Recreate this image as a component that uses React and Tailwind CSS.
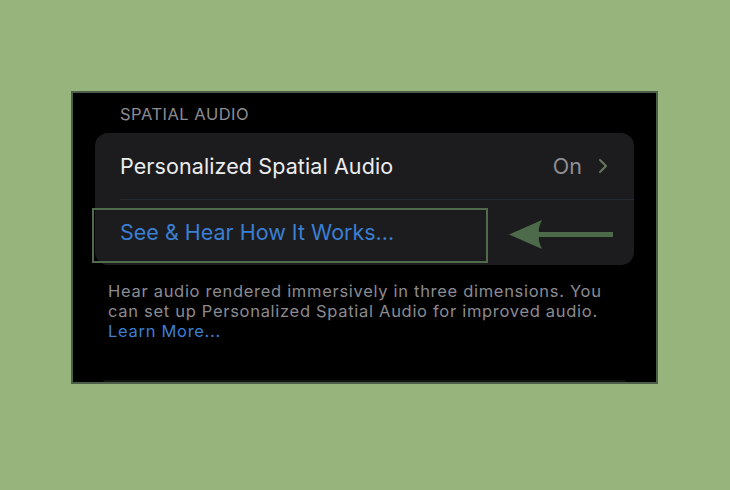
import React from "react";

const font = { fontFamily: "Inter, 'Noto Sans', 'Liberation Sans', sans-serif" };

function Chevron() {
  return (
    <svg width="10" height="16" viewBox="0 0 10 16" fill="none">
      <path d="M2 2l6 6-6 6" stroke="#66785f" strokeWidth="2" strokeLinecap="round" strokeLinejoin="round" />
    </svg>
  );
}

function Arrow() {
  return (
    <svg width="104" height="31" viewBox="0 0 104 31" className="absolute left-[414px] top-[86px]">
      <path
        d="M0 15.5 L33 1 Q29 9 30 13 L104 13 L104 18 L30 18 Q29 22 33 30 Z"
        fill="#4d6a4b"
      />
    </svg>
  );
}

export default function App() {
  return (
    <div className="w-[730px] h-[490px] bg-[#97b47c] pt-[91px] pl-[71px]" style={font}>
      <div className="w-[587px] h-[293px] border-2 border-[#4b5e47] bg-black flex flex-col overflow-hidden">
        <div className="pt-[11px] pl-[47px] text-[16.5px] leading-[20px] tracking-[0.5px] text-[#8d8d92]">
          SPATIAL AUDIO
        </div>
        <div className="relative mt-[9px] ml-[22px] w-[539px] h-[132px] rounded-[13px] bg-[#1c1c1e] flex flex-col">
          <div className="h-[66px] flex items-center pl-[25px] pr-[26px]">
            <span className="text-[21.5px] tracking-[0.1px] text-[#ececee] flex-1">Personalized Spatial Audio</span>
            <span className="text-[21.5px] text-[#8e8e93] mr-[16px]">On</span>
            <Chevron />
          </div>
          <div className="ml-[25px] h-px bg-[#262b31]" />
          <div className="h-[65px] flex items-center pl-[25px]">
            <span className="text-[21.5px] text-[#3a7fd3]">See &amp; Hear How It Works...</span>
          </div>
          <div className="absolute left-[-3px] top-[75px] w-[396px] h-[55px] border-2 border-[#4f6b4c]" />
          <Arrow />
        </div>
        <div className="mt-[16px] pl-[35px] pr-[10px] text-[16.5px] leading-[20px] tracking-[0.7px] text-[#8b8b90] whitespace-nowrap">
          <p>Hear audio rendered immersively in three dimensions. You</p>
          <p>can set up Personalized Spatial Audio for improved audio.</p>
          <p className="text-[#3a7fd3]">Learn More...</p>
        </div>
        <div className="mt-auto ml-[30px] mr-[30px] h-[2px] rounded-t-[6px] bg-[#121213]" />
      </div>
    </div>
  );
}
